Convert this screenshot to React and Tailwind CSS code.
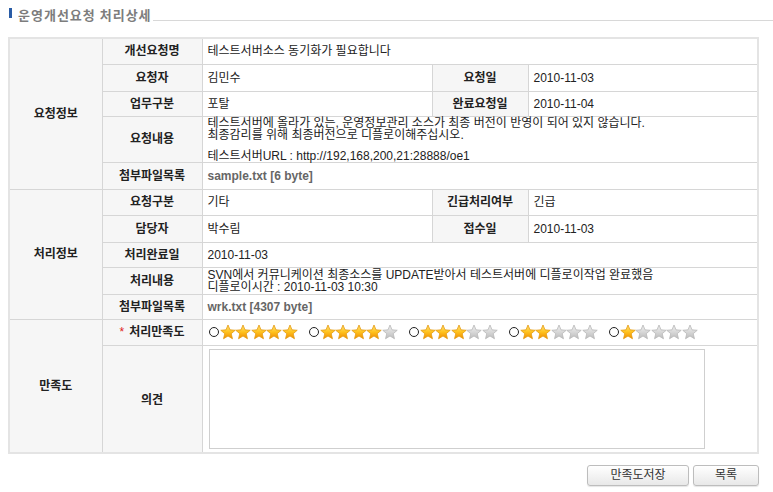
import React from "react";

const FONT = { fontFamily: '"Liberation Sans", "Noto Sans CJK KR", sans-serif' };

function Star({ on, id }) {
  const d = "M8 1 L10 5.85 L15.23 6.25 L11.23 9.65 L12.47 14.75 L8 12 L3.53 14.75 L4.77 9.65 L0.77 6.25 L6 5.85 Z";
  return (
    <svg width="16" height="16" viewBox="0 0 16 16" className="block">
      <defs>
        <linearGradient id={id} x1="0" y1="0" x2="0" y2="1">
          {on ? (
            <>
              <stop offset="0" stopColor="#ffe27a" />
              <stop offset="0.5" stopColor="#ffc31f" />
              <stop offset="1" stopColor="#f08c00" />
            </>
          ) : (
            <>
              <stop offset="0" stopColor="#f0f0f0" />
              <stop offset="0.5" stopColor="#d8d8d8" />
              <stop offset="1" stopColor="#bcbcbc" />
            </>
          )}
        </linearGradient>
      </defs>
      <path d={d} fill={`url(#${id})`} stroke={on ? "#e39a12" : "#b8b8b8"} strokeWidth="0.8" strokeLinejoin="round" />
    </svg>
  );
}

function Rating({ n, idx }) {
  return (
    <div className="flex items-center w-[100px]">
      <span className="w-[10px] h-[10px] rounded-full border border-[#222] bg-white mr-[1px] shrink-0" />
      {[0, 1, 2, 3, 4].map((i) => (
        <span key={i} className="-mr-[0.5px]">
          <Star on={i < n} id={`g${idx}-${i}`} />
        </span>
      ))}
    </div>
  );
}

const th = "bg-[#f6f6f6] border border-[#d6d6d6] text-center font-bold text-[12px] text-[#222] p-0";
const tdv = "bg-white border border-[#d6d6d6] text-[12px] text-[#222] pl-[5px] pr-[4px] py-0";

export default function App() {
  return (
    <div className="w-[773px] h-[492px] bg-white relative" style={FONT}>
      {/* heading */}
      <div className="flex items-end pt-[7px] pl-[9px] h-[21px]">
        <span className="w-[3px] h-[10px] bg-[#2a5ca6] mb-[3px]" />
        <span className="ml-[6px] text-[13px] font-bold text-[#7d7d7d] leading-[13px] tracking-[1px]" style={{ fontFamily: '"Noto Sans CJK KR", sans-serif' }}>
          운영개선요청 처리상세
        </span>
        <span className="flex-1 border-b border-[#d8d8d8] ml-[1px]" />
      </div>

      {/* table */}
      <div className="ml-[8px] mt-[16px] w-[751px] border-2 border-[#e4e4e4]">
        <table className="w-full table-fixed border-collapse border-hidden">
          <colgroup>
            <col className="w-[92px]" />
            <col className="w-[100px]" />
            <col className="w-[230px]" />
            <col className="w-[96px]" />
            <col />
          </colgroup>
          <tbody>
            <tr className="h-[25px]">
              <td rowSpan={5} className={th}>요청정보</td>
              <td className={th}>개선요청명</td>
              <td colSpan={3} className={tdv}>테스트서버소스 동기화가 필요합니다</td>
            </tr>
            <tr className="h-[27px]">
              <td className={th}>요청자</td>
              <td className={tdv}>김민수</td>
              <td className={th}>요청일</td>
              <td className={tdv}>2010-11-03</td>
            </tr>
            <tr className="h-[25px]">
              <td className={th}>업무구분</td>
              <td className={tdv}>포탈</td>
              <td className={th}>완료요청일</td>
              <td className={tdv}>2010-11-04</td>
            </tr>
            <tr className="h-[45px]">
              <td className={th}>요청내용</td>
              <td colSpan={3} className={`${tdv} leading-[12px] align-top text-[11.5px]`}>
                <div>테스트서버에 올라가 있는, 운영정보관리 소스가 최종 버전이 반영이 되어 있지 않습니다.</div>
                <div>최종감리를 위해 최종버전으로 디플로이해주십시오.</div>
                <div className="h-[9px]" />
                <div>테스트서버URL : http://192,168,200,21:28888/oe1</div>
              </td>
            </tr>
            <tr className="h-[27px]">
              <td className={th}>첨부파일목록</td>
              <td colSpan={3} className={`${tdv} font-bold text-[#666]`}>sample.txt [6 byte]</td>
            </tr>

            <tr className="h-[26px]">
              <td rowSpan={5} className={th}>처리정보</td>
              <td className={th}>요청구분</td>
              <td className={tdv}>기타</td>
              <td className={th}>긴급처리여부</td>
              <td className={tdv}>긴급</td>
            </tr>
            <tr className="h-[27px]">
              <td className={th}>담당자</td>
              <td className={tdv}>박수림</td>
              <td className={th}>접수일</td>
              <td className={tdv}>2010-11-03</td>
            </tr>
            <tr className="h-[25px]">
              <td className={th}>처리완료일</td>
              <td colSpan={3} className={tdv}>2010-11-03</td>
            </tr>
            <tr className="h-[27px]">
              <td className={th}>처리내용</td>
              <td colSpan={3} className={`${tdv} leading-[12px] text-[11.5px]`}>
                <div>SVN에서 커뮤니케이션 최종소스를 UPDATE받아서 테스트서버에 디플로이작업 완료했음</div>
                <div>디플로이시간 : 2010-11-03 10:30</div>
              </td>
            </tr>
            <tr className="h-[25px]">
              <td className={th}>첨부파일목록</td>
              <td colSpan={3} className={`${tdv} font-bold text-[#666]`}>wrk.txt [4307 byte]</td>
            </tr>

            <tr className="h-[26px]">
              <td rowSpan={2} className={th}>만족도</td>
              <td className={th}>
                <span className="text-[#e02020] font-normal mr-[5px]">*</span>처리만족도
              </td>
              <td colSpan={3} className={`${tdv} pl-[6px]`}>
                <div className="flex items-center">
                  <Rating n={5} idx={0} />
                  <Rating n={4} idx={1} />
                  <Rating n={3} idx={2} />
                  <Rating n={2} idx={3} />
                  <Rating n={1} idx={4} />
                </div>
              </td>
            </tr>
            <tr className="h-[106px]">
              <td className={`${th} pt-[2px]`}>의견</td>
              <td colSpan={3} className={`${tdv} pl-[6px] py-[3px]`}>
                <div className="w-[496px] h-[100px] border border-[#cfcfcf] bg-white" />
              </td>
            </tr>
          </tbody>
        </table>
      </div>

      {/* buttons */}
      <div className="flex justify-end gap-[4px] w-[759px] mt-[11px]">
        <button className="w-[102px] h-[21px] rounded-[3px] border border-[#bdbdbd] bg-gradient-to-b from-white to-[#e8e8e8] text-[12px] text-[#333] leading-[19px] shadow-[0_1px_1px_rgba(0,0,0,0.1)]">
          만족도저장
        </button>
        <button className="w-[66px] h-[21px] rounded-[3px] border border-[#bdbdbd] bg-gradient-to-b from-white to-[#e8e8e8] text-[12px] text-[#333] leading-[19px] shadow-[0_1px_1px_rgba(0,0,0,0.1)]">
          목록
        </button>
      </div>
    </div>
  );
}
